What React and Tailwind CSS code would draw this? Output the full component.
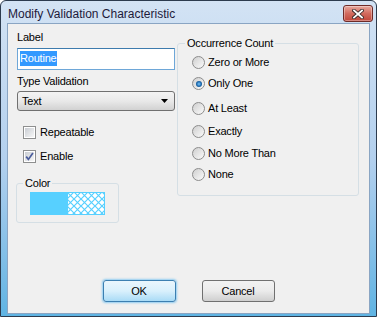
import React from 'react';

const ui = "font-['Liberation_Sans',Arial,sans-serif] text-[11px] leading-[13px] tracking-[-0.2px] text-black";

function Radio({ label, checked, className = '' }) {
  return (
    <label className={`flex items-center gap-[3px] h-[13px] ${className}`}>
      <span className="w-[13px] h-[13px] rounded-full border border-[#8c8c8c] bg-linear-to-br from-[#cfcfcf] to-[#fbfbfb] flex items-center justify-center shrink-0">
        {checked && <span className="w-[6px] h-[6px] rounded-full bg-radial from-[#7cc6f7] via-[#1f70b6] to-[#0b3563]" />}
      </span>
      <span>{label}</span>
    </label>
  );
}

function Check({ label, checked, className = '' }) {
  return (
    <label className={`flex items-center gap-[4px] h-[13px] ${className}`}>
      <span className="w-[13px] h-[13px] border border-[#8e8f8f] bg-white p-[1px] flex shrink-0">
        <span className="flex-1 bg-linear-to-br from-[#c9cdd3] to-[#f7f7f7] flex items-center justify-center">
          {checked && (
            <svg width="9" height="9" viewBox="0 0 9 9">
              <path d="M1.2 4.6 L3.4 7.4 L7.9 1" fill="none" stroke="#4a5c9c" strokeWidth="1.7" />
            </svg>
          )}
        </span>
      </span>
      <span>{label}</span>
    </label>
  );
}

export default function App() {
  return (
    <div className={`w-[377px] h-[317px] ${ui} bg-white`}>
      {/* marco de la ventana */}
      <div className="w-full h-full flex flex-col border border-[#2c3b4e] rounded-t-[6px] bg-linear-to-b from-[#d3e3f4] via-[#b3d0ee] to-[#5fb4e3] px-[6px] pb-[2px]">
        {/* barra de titulo */}
        <div className="h-[22px] flex items-start justify-between">
          <span className="pl-[1px] mt-[6px] text-[12px] leading-[15px] tracking-normal text-[#1d1a3a]">Modify Validation Characteristic</span>
          <button className="mt-[4px] -mr-[3px] w-[30px] h-[17px] rounded-[3px] border border-[#6e2b28] bg-linear-to-b from-[#e6a99f] via-[#d26a5e] to-[#c0463a] flex items-center justify-center shadow-[inset_0_0_0_1px_rgba(255,255,255,0.35)]">
            <svg width="12" height="10" viewBox="0 0 12 10">
              <path d="M2 1.5 L10 8.5 M10 1.5 L2 8.5" stroke="#3a2a2a" strokeWidth="3.6" strokeLinecap="square" />
              <path d="M2 1.5 L10 8.5 M10 1.5 L2 8.5" stroke="#ffffff" strokeWidth="1.8" strokeLinecap="square" />
            </svg>
          </button>
        </div>

        {/* area cliente */}
        <div className="flex-1 border border-[#8aa5c3] bg-[#f0f0f0] flex flex-col">
          <div className="flex items-start">
            {/* columna izquierda */}
            <div className="w-[158px] ml-[9px] pt-[7px] flex flex-col">
              <span>Label</span>
              <div className="mt-[4px] h-[22px] border border-[#6ea7d8] border-t-[#3d7bad] bg-white pl-[2px] pt-[2px]">
                <span className="inline-block bg-[#3399ff] text-white leading-[15px]">Routine</span>
              </div>
              <span className="mt-[5px]">Type Validation</span>
              <div className="mt-[3px] h-[20px] rounded-[3px] border border-[#707070] bg-linear-to-b from-[#f3f3f3] via-[#e9e9e9] to-[#d2d2d2] flex items-center justify-between pl-[4px] pr-[5px]">
                <span>Text</span>
                <svg width="8" height="4" viewBox="0 0 8 4">
                  <path d="M0 0 H7 L3.5 4 Z" fill="#000" />
                </svg>
              </div>
              <Check label="Repeatable" className="mt-[15px] ml-[6px]" />
              <Check label="Enable" checked className="mt-[11px] ml-[6px]" />

              <fieldset className="mt-[14px] -ml-[1px] w-[103px] border border-[#d5dfe5] rounded-[3px]">
                <legend className="ml-[6px] px-[2px]">Color</legend>
                <div className="pl-[13px] pt-[2px] pb-[7px] flex">
                  <div className="w-[37px] h-[23px] bg-[#57d0ff]" />
                  <svg width="38" height="23" viewBox="0 0 38 23" className="block">
                    <defs>
                      <pattern id="hatch" width="7" height="7" patternUnits="userSpaceOnUse">
                        <path d="M0 0 L7 7 M7 0 L0 7" stroke="#57d0ff" strokeWidth="1.2" />
                      </pattern>
                    </defs>
                    <rect x="0" y="0" width="38" height="23" fill="#ffffff" />
                    <rect x="0" y="0" width="38" height="23" fill="url(#hatch)" />
                    <rect x="0.5" y="0.5" width="37" height="22" fill="none" stroke="#57d0ff" />
                  </svg>
                </div>
              </fieldset>
            </div>

            {/* grupo derecho */}
            <fieldset className="ml-[2px] mt-[13px] w-[182px] border border-[#d5dfe5] rounded-[3px]">
              <legend className="ml-[7px] px-[2px]">Occurrence Count</legend>
              <div className="pl-[14px] pt-[6px] pb-[14px] flex flex-col">
                <Radio label="Zero or More" />
                <Radio label="Only One" checked className="mt-[8px]" />
                <Radio label="At Least" className="mt-[12px]" />
                <Radio label="Exactly" className="mt-[10px]" />
                <Radio label="No More Than" className="mt-[9px]" />
                <Radio label="None" className="mt-[8px]" />
              </div>
            </fieldset>
          </div>

          {/* botones */}
          <div className="mt-auto pb-[11px] flex justify-center gap-[26px]">
            <button className="w-[73px] h-[22px] rounded-[3px] border border-[#3c7fb1] bg-linear-to-b from-[#eaf6fd] via-[#d9f0fc] to-[#a9dbf6] shadow-[0_0_2px_1px_rgba(80,180,240,0.6)]">
              OK
            </button>
            <button className="w-[73px] h-[22px] rounded-[3px] border border-[#707070] bg-linear-to-b from-[#f2f2f2] via-[#ebebeb] to-[#cfcfcf]">
              Cancel
            </button>
          </div>
        </div>
      </div>
    </div>
  );
}
